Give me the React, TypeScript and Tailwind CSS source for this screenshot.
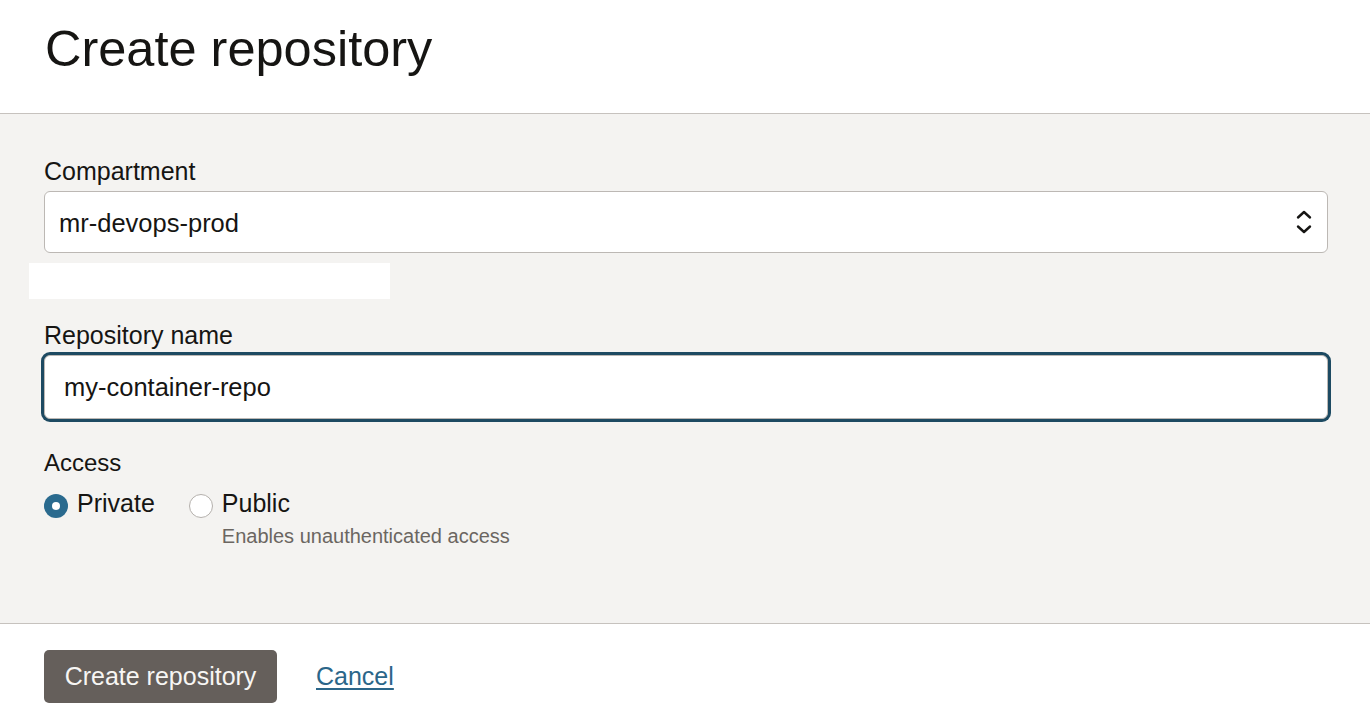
import React from "react";

export default function App() {
  return (
    <div
      className="w-[1370px] h-[720px] bg-white text-[#161513] overflow-hidden"
      style={{ fontFamily: '"Liberation Sans", Arial, Helvetica, sans-serif' }}
    >
      {/* Header */}
      <div className="h-[114px] border-b border-[#c6c2be] px-[45px] pt-[24px]">
        <h1 className="text-[50.5px] leading-none font-normal">Create repository</h1>
      </div>

      {/* Form body */}
      <div className="h-[509px] bg-[#f4f3f1] px-[44px] pt-[45px]">
        <div className="text-[25px] leading-none">Compartment</div>
        <div className="mt-[7px] h-[62px] w-[1284px] rounded-[6px] border border-[#bcb8b4] bg-white flex items-center justify-between pl-[14px] pr-[14px]">
          <span className="mt-[4px] text-[25.5px] leading-none">mr-devops-prod</span>
          <svg width="18" height="28" viewBox="0 0 18 28" fill="none" stroke="#161513" strokeWidth="2.4" strokeLinecap="round" strokeLinejoin="round">
            <path d="M3 9.5 L9 4 L15 9.5" />
            <path d="M3 18.5 L9 24 L15 18.5" />
          </svg>
        </div>

        <div className="mt-[10px] ml-[-15px] h-[36px] w-[361px] bg-white" />

        <div className="mt-[24px] text-[25px] leading-none">Repository name</div>
        <div className="mt-[7px] h-[64px] w-[1284px] rounded-[6px] border border-[#bcb8b4] bg-white ring-[3px] ring-[#1d4a62] flex items-center pl-[19px]">
          <span className="mt-[2px] text-[25.5px] leading-none">my-container-repo</span>
        </div>

        <div className="mt-[32px] text-[24px] leading-none">Access</div>
        <div className="mt-[13px] flex items-start">
          <div className="flex items-start">
            <div className="mt-[6px] h-[24px] w-[24px] rounded-full bg-[#2a6a8e] flex items-center justify-center">
              <div className="h-[8px] w-[8px] rounded-full bg-white" />
            </div>
            <span className="ml-[9px] mt-[3px] text-[25px] leading-none">Private</span>
          </div>
          <div className="ml-[34px] flex items-start">
            <div className="mt-[6px] h-[24px] w-[24px] rounded-full border border-[#b4b0ac] bg-white" />
            <div className="ml-[9px] mt-[3px] flex flex-col">
              <span className="text-[25px] leading-none">Public</span>
              <span className="mt-[10px] text-[20px] leading-none text-[#6b6661]">Enables unauthenticated access</span>
            </div>
          </div>
        </div>
      </div>

      {/* Footer */}
      <div className="border-t border-[#c6c2be] px-[44px] pt-[26px] flex items-center">
        <button className="h-[53px] w-[233px] rounded-[5px] bg-[#655f5b] text-[#f7f6f4] text-[25px] leading-none flex items-center justify-center">
          Create repository
        </button>
        <a href="#" className="ml-[39px] text-[25px] leading-none text-[#2b6689] underline underline-offset-[3px] decoration-[2px]">
          Cancel
        </a>
      </div>
    </div>
  );
}
